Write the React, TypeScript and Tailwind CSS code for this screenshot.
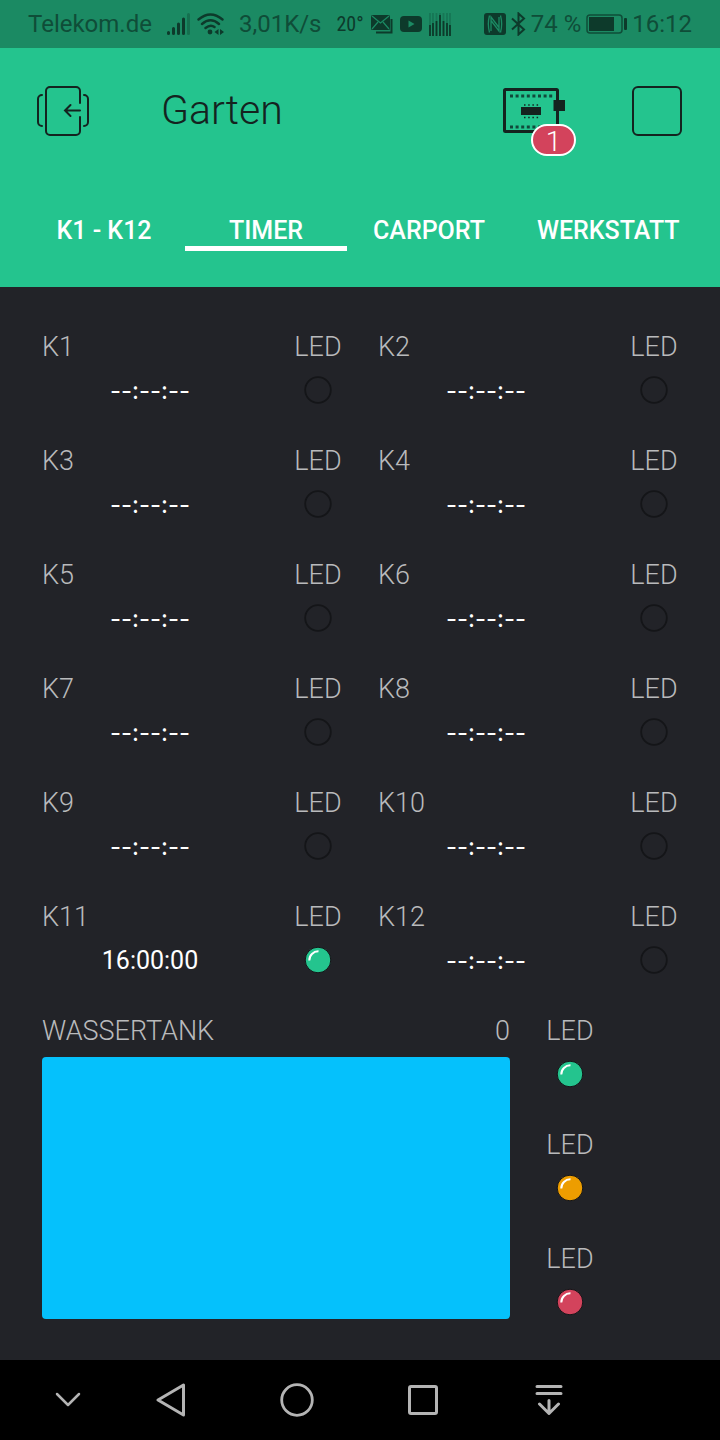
import { useState } from "react";

type LedColor = "off" | "green" | "orange" | "red";

const TABS = ["K1 - K12", "TIMER", "CARPORT", "WERKSTATT"];

const EMPTY_TIME = "--:--:--";

const TIMERS: { name: string; time: string; led: LedColor }[] = [
  { name: "K1", time: EMPTY_TIME, led: "off" },
  { name: "K2", time: EMPTY_TIME, led: "off" },
  { name: "K3", time: EMPTY_TIME, led: "off" },
  { name: "K4", time: EMPTY_TIME, led: "off" },
  { name: "K5", time: EMPTY_TIME, led: "off" },
  { name: "K6", time: EMPTY_TIME, led: "off" },
  { name: "K7", time: EMPTY_TIME, led: "off" },
  { name: "K8", time: EMPTY_TIME, led: "off" },
  { name: "K9", time: EMPTY_TIME, led: "off" },
  { name: "K10", time: EMPTY_TIME, led: "off" },
  { name: "K11", time: "16:00:00", led: "green" },
  { name: "K12", time: EMPTY_TIME, led: "off" },
];

const TANK_LEDS: LedColor[] = ["green", "orange", "red"];

const LED_FILL: Record<LedColor, string> = {
  off: "none",
  green: "#24c48e",
  orange: "#ed9d00",
  red: "#d3435c",
};

function StatusBar() {
  return (
    <div className="flex h-12 items-center justify-between bg-[#1b8a63] px-7 text-2xl text-[#0f4d38]">
      <div className="flex items-center gap-[15px]">
        <span>Telekom.de</span>
        <div className="flex items-center gap-[7px]">
          <svg width="23" height="22" viewBox="0 0 23 22" strokeWidth="3" strokeLinecap="round" stroke="#0d3a2b">
            <path d="M1.5 19.5v1M6.5 15.5v5M11.5 11v9.500M16.500 6v14.500" />
            <path d="M21.500 1.500v19" stroke="#15704f" />
          </svg>
          <svg width="27" height="22" viewBox="0 0 27 22" fill="none" stroke="#0d3a2b" strokeWidth="2.400" strokeLinecap="round">
            <path d="M1.500 6.500Q13.500-3.500 25.500 6.500M5 11Q13.500 3.500 22 11M8.500 15Q13.500 11 17.500 14" />
            <circle cx="13" cy="19" r="2.400" fill="#0d3a2b" stroke="none" />
            <path d="M21.500 16v6l-4-3ZM23 16v6l4-3Z" fill="#0d3a2b" stroke="none" />
          </svg>
        </div>
        <span>3,01K/s</span>
        <div className="flex items-center gap-[7px]">
          <span className="font-['Roboto_Condensed','Liberation_Sans_Narrow',Roboto,sans-serif] text-xl text-[#0d3a2b]">20°</span>
          <svg width="22" height="19" viewBox="0 0 22 19" fill="#0d3a2b">
            <rect width="19" height="15" rx="1.500" />
            <path d="M20.500 4v13.500H5" fill="none" stroke="#0d3a2b" strokeWidth="2" />
            <path d="m1 1 8.500 7L18 1M1 14l6-7M18 14l-6-7" fill="none" stroke="#1b8a63" strokeWidth="1.200" />
          </svg>
          <svg width="22" height="16" viewBox="0 0 22 16" fill="#0d3a2b">
            <rect width="22" height="16" rx="4" />
            <path d="M8.500 4.500v7l6-3.500Z" fill="#1b8a63" />
          </svg>
          <svg width="22" height="23" viewBox="0 0 22 23" strokeWidth="1.800">
            <path d="M1 0v23M4 0v23M7.500 0v23M11 0v23M14.500 0v23M18 0v23M21 0v23" stroke="#177655" />
            <path d="M1 12v11M4 10v13M7.500 8v15M11 2v21M14.500 8v15M18 10v13M21 12v11" stroke="#0d3a2b" />
          </svg>
        </div>
      </div>
      <div className="flex items-center gap-[5px]">
        <svg width="22" height="22" viewBox="0 0 22 22">
          <rect width="22" height="22" rx="3" fill="#0d3a2b" />
          <path
            d="M5.500 2.500C4 8 4 14 5.500 19.500M16.500 2.500C18 8 18 14 16.500 19.500M7 18V4l8 10.500M15 4v14L7 7.500"
            fill="none"
            stroke="#1b8a63"
            strokeWidth="1.300"
          />
        </svg>
        <svg width="15" height="24" viewBox="0 0 15 24" fill="none" stroke="#0d3a2b" strokeWidth="2">
          <path d="m1 6.500 12 11L7.500 22.500v-21L13 6.500l-12 11" />
        </svg>
        <span>74 %</span>
        <svg width="41" height="20" viewBox="0 0 41 20">
          <rect x="1" y="1" width="35" height="18" rx="3" fill="none" stroke="#0f4d38" strokeWidth="1.500" />
          <rect x="3" y="3" width="25" height="14" fill="#0d3a2b" />
          <rect x="38" y="4" width="3" height="12" rx="1" fill="#0d3a2b" />
        </svg>
        <span>16:12</span>
      </div>
    </div>
  );
}

function Header() {
  const [active, setActive] = useState("TIMER");

  return (
    <header className="bg-[#24c48e] pb-9">
      <div className="flex h-[126px] items-center pl-[37px] pr-[38px] text-[#14231f]">
        <button aria-label="Back" className="cursor-pointer">
          <svg width="52" height="50" viewBox="0 0 52 50" fill="none" stroke="currentColor" strokeWidth="2" strokeLinecap="round">
            <path d="M43 17V5a4 4 0 0 0-4-4H13a4 4 0 0 0-4 4v40a4 4 0 0 0 4 4h26a4 4 0 0 0 4-4V31" />
            <path d="M5 9a4 4 0 0 0-4 4v23a4 4 0 0 0 4 4M47 9a4 4 0 0 1 4 4v23a4 4 0 0 1-4 4" />
            <path d="M43 24.500H28M33.500 19 28 24.500l5.500 5.500" />
          </svg>
        </button>
        <h1 className="ml-[72px] flex-1 text-[41px] font-light">Garten</h1>
        <button aria-label="Devices" className="relative mr-[66px] cursor-pointer">
          <svg width="63" height="46" viewBox="0 0 63 46">
            <rect x="1.500" y="1.500" width="53" height="42" rx="1" fill="none" stroke="currentColor" strokeWidth="3" />
            <path d="M7 8h44M7 39h44" stroke="#11493a" strokeWidth="3" strokeDasharray="3 2.600" />
            <rect x="18" y="19" width="20" height="8" fill="currentColor" />
            <path d="M21 17h15M21 29.500h15" stroke="currentColor" strokeWidth="1.500" strokeDasharray="1.500 2.700" />
            <rect x="50.500" y="12" width="11.500" height="11" fill="currentColor" />
          </svg>
          <span className="absolute left-7 top-9 flex h-8 w-[45px] justify-center rounded-full border-2 border-white bg-[#d3435c] text-[28px] font-light leading-8 text-white">
            1
          </span>
        </button>
        <button aria-label="Stop" className="size-[50px] cursor-pointer rounded-md border-2 border-[#14231f]" />
      </div>

      <nav className="mt-[41px] flex pl-[23px]">
        {TABS.map((tab) => (
          <button
            key={tab}
            onClick={() => setActive(tab)}
            className={`min-w-[162px] cursor-pointer whitespace-nowrap border-b-[5px] px-[26px] text-[25px] font-medium leading-[31px] text-white ${
              tab === active ? "border-white" : "border-transparent"
            }`}
          >
            {tab}
          </button>
        ))}
      </nav>
    </header>
  );
}

function Led({ color }: { color: LedColor }) {
  return (
    <div className="flex flex-col items-center gap-[14px]">
      <span>LED</span>
      <svg width="28" height="28" viewBox="0 0 28 28" fill="none">
        <circle cx="14" cy="14" r="12.800" fill={LED_FILL[color]} stroke="#141518" strokeWidth={color === "off" ? 1.8 : 1} />
        {color !== "off" && <path d="M5.300 14.500A9 9 0 0 1 14.500 5.300" stroke="#fff" strokeWidth="2" />}
      </svg>
    </div>
  );
}

function Timer({ name, time }: { name: string; time: string }) {
  return (
    <div className="col-span-3 flex flex-col gap-[14px] px-[18px]">
      <span>{name}</span>
      {time === EMPTY_TIME ? (
        <span className="text-center font-[Inter,sans-serif] text-2xl font-normal leading-[30px] text-white">{time}</span>
      ) : (
        <span className="text-center text-[25px] font-normal leading-[30px] text-white">{time}</span>
      )}
    </div>
  );
}

function Tank() {
  return (
    <div className="col-span-6 row-span-3 flex flex-col gap-[11px] px-[18px] pb-[39px]">
      <div className="flex justify-between">
        <span>WASSERTANK</span>
        <span>0</span>
      </div>
      <div className="flex-1 rounded bg-[#05c1fc]" />
    </div>
  );
}

function NavigationBar() {
  return (
    <nav className="flex h-20 items-center bg-black text-[#b4b4b4]">
      <button aria-label="Hide bar" className="flex w-[15%] cursor-pointer justify-center pl-[4%]">
        <svg width="26" height="16" viewBox="0 0 26 16" fill="none" stroke="currentColor" strokeWidth="2.500" strokeLinecap="round" strokeLinejoin="round">
          <path d="m2 2 11 11L24 2" />
        </svg>
      </button>
      <button aria-label="Back" className="flex w-[17.5%] cursor-pointer justify-center">
        <svg width="30" height="34" viewBox="0 0 30 34" fill="none" stroke="currentColor" strokeWidth="3" strokeLinejoin="round">
          <path d="M2 17 27.500 2v30Z" />
        </svg>
      </button>
      <button aria-label="Home" className="flex w-[17.5%] cursor-pointer justify-center">
        <svg width="34" height="34" viewBox="0 0 34 34" fill="none" stroke="currentColor" strokeWidth="2.800">
          <circle cx="17" cy="17" r="15.300" />
        </svg>
      </button>
      <button aria-label="Recent apps" className="flex w-[17.5%] cursor-pointer justify-center">
        <svg width="30" height="30" viewBox="0 0 30 30" fill="none" stroke="currentColor" strokeWidth="3">
          <rect x="1.500" y="1.500" width="27" height="27" rx="1.500" />
        </svg>
      </button>
      <button aria-label="Notifications" className="flex w-[17.5%] cursor-pointer justify-center">
        <svg width="28" height="30" viewBox="0 0 28 30" fill="none" stroke="currentColor" strokeWidth="3" strokeLinecap="round" strokeLinejoin="round">
          <path d="M2 1.500h24M2 8.500h24M14 15.500V28M4.500 19l9.500 9.500L23.500 19" />
        </svg>
      </button>
    </nav>
  );
}

function App() {
  return (
    <div className="flex min-h-screen flex-col bg-[#222328] font-[Roboto,sans-serif]">
      <StatusBar />
      <Header />
      <main className="grid flex-1 auto-rows-[114px] grid-cols-8 px-6 pt-[45px] text-[27px] font-light leading-[30px] text-[#b9babc]">
        {TIMERS.map((timer) => (
          <div key={timer.name} className="col-span-4 grid grid-cols-4">
            <Timer name={timer.name} time={timer.time} />
            <Led color={timer.led} />
          </div>
        ))}
        <Tank />
        {TANK_LEDS.map((color) => (
          <div key={color} className="col-start-7">
            <Led color={color} />
          </div>
        ))}
      </main>
      <NavigationBar />
    </div>
  );
}

export default App;
